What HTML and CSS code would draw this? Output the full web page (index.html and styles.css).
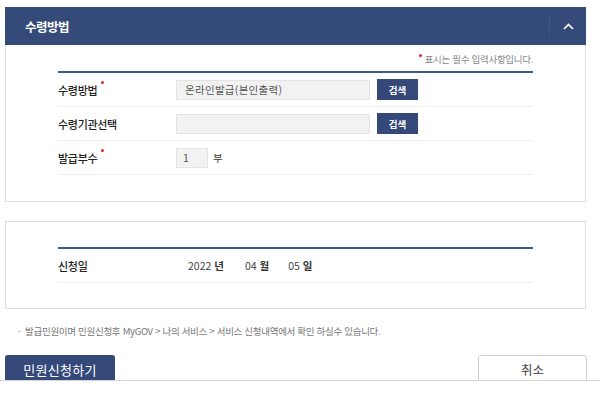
FILE: index.html
```html
<!DOCTYPE html>
<html lang="ko">
<head>
<meta charset="utf-8">
<link rel="stylesheet" href="styles.css">
</head>
<body>
<div class="page">
  <section class="panel">
    <div class="panel-head">
      <h2 class="panel-title">수령방법</h2>
      <div class="head-sep"></div>
      <button class="toggle" aria-label="접기">
        <svg width="11" height="7" viewBox="0 0 11 7"><path d="M1 6 L5.5 1.5 L10 6" fill="none" stroke="#fff" stroke-width="1.6"/></svg>
      </button>
    </div>
    <div class="panel-body">
      <p class="req-note"><span class="dot"></span>표시는 필수 입력사항입니다.</p>
      <div class="form-table">
        <div class="row">
          <div class="label">수령방법<span class="dot dot-label"></span></div>
          <div class="value">
            <div class="field wide">온라인발급(본인출력)</div>
            <button class="btn-search">검색</button>
          </div>
        </div>
        <div class="row">
          <div class="label">수령기관선택</div>
          <div class="value">
            <div class="field wide"></div>
            <button class="btn-search">검색</button>
          </div>
        </div>
        <div class="row">
          <div class="label">발급부수<span class="dot dot-label"></span></div>
          <div class="value">
            <div class="field small">1</div>
            <span class="unit">부</span>
          </div>
        </div>
      </div>
    </div>
  </section>

  <section class="panel panel-date">
    <div class="panel-body date-body">
      <div class="form-table">
        <div class="row">
          <div class="label">신청일</div>
          <div class="value date-value">
            <span class="d d-year">2022 <b>년</b></span>
            <span class="d d-month">04 <b>월</b></span>
            <span class="d d-day">05 <b>일</b></span>
          </div>
        </div>
      </div>
    </div>
  </section>

  <p class="info">· &nbsp;발급민원이며 민원신청후 MyGOV &gt; 나의 서비스 &gt; 서비스 신청내역에서 확인 하실수 있습니다.</p>

  <div class="actions">
    <button class="btn-primary">민원신청하기</button>
    <button class="btn-cancel">취소</button>
  </div>
</div>
<div class="bottom-bar"></div>
</body>
</html>
```

FILE: styles.css
```css
* { box-sizing: border-box; }
html, body { margin: 0; padding: 0; background: #fff; }
body {
  font-family: "Noto Sans CJK KR", "Noto Sans", "Liberation Sans", sans-serif;
  color: #333;
  font-size: 11px;
  overflow: hidden;
}
.page {
  padding: 7px 14px 0 5px;
}
.panel {
  border: 1px solid #dedede;
  border-top: none;
}
.panel-head {
  height: 38px;
  background: #344a78;
  display: flex;
  align-items: center;
  margin: 0 -1px 0 -1px;
  padding-left: 20px;
}
.panel-title {
  margin: 0;
  flex: 1;
  font-size: 12.5px;
  font-weight: bold;
  color: #fff;
  letter-spacing: -0.5px;
}
.head-sep {
  width: 0;
  height: 20px;
  border-left: 1px dotted #4c6090;
}
.toggle {
  width: 36px;
  height: 38px;
  border: 0;
  background: transparent;
  padding: 0;
  display: flex;
  align-items: center;
  justify-content: center;
}
.panel-body {
  padding: 7px 52px 26px 52px;
}
.req-note {
  margin: 0 0 5px;
  text-align: right;
  font-size: 9.5px;
  color: #888;
  line-height: 14px;
  letter-spacing: -0.3px;
}
.dot {
  display: inline-block;
  width: 3px;
  height: 3px;
  border-radius: 50%;
  background: #e0262b;
  vertical-align: top;
  margin: 2px 3px 0 0;
}
.dot-label {
  margin: -1px 0 0 4px;
}
.form-table {
  border-top: 2px solid #445a85;
}
.row {
  display: flex;
  align-items: center;
  height: 34px;
  border-bottom: 1px solid #efefef;
}
.label {
  width: 118px;
  font-size: 11px;
  font-weight: 500;
  color: #222;
  letter-spacing: -0.3px;
}
.value {
  display: flex;
  align-items: center;
}
.field {
  height: 20px;
  background: #f2f2f2;
  border: 1px solid #e4e4e4;
  font-size: 10.5px;
  color: #555;
  line-height: 18px;
  padding-left: 8px;
  letter-spacing: 0.3px;
}
.field.wide { width: 194px; }
.field.small { width: 32px; padding-left: 6px; }
.btn-search {
  margin-left: 7px;
  width: 41px;
  height: 21px;
  border: 0;
  background: #34497a;
  color: #fff;
  font-family: inherit;
  font-size: 9.5px;
  font-weight: bold;
  padding: 0;
}
.unit {
  margin-left: 5px;
  font-size: 10.5px;
  color: #333;
}
.panel-date {
  margin-top: 19px;
  border-top: 1px solid #dedede;
}
.date-body {
  padding: 25px 52px 25px 52px;
}
.date-body .row { height: 34px; }
.date-value {
  font-size: 10.5px;
  color: #444;
}
.d b { font-weight: bold; color: #333; }
.d-year { margin-left: 12px; }
.d-month { margin-left: 21px; }
.d-day { margin-left: 19px; }
.info {
  margin: 15px 0 0 13px;
  font-size: 9.5px;
  color: #777;
  line-height: 14px;
  letter-spacing: -0.3px;
}
.actions {
  margin-top: 17px;
  display: flex;
  justify-content: space-between;
  margin-right: -1px;
}
.btn-primary {
  width: 110px;
  height: 40px;
  border: 0;
  border-radius: 3px;
  background: #34497a;
  color: #fff;
  font-family: inherit;
  font-size: 13px;
  padding: 0 0 12px;
  letter-spacing: 0.3px;
}
.btn-cancel {
  width: 109px;
  height: 40px;
  border: 1px solid #cfcfcf;
  border-radius: 3px;
  background: #fff;
  color: #444;
  font-family: inherit;
  font-size: 12.5px;
  padding: 0 0 12px;
}
.bottom-bar {
  position: fixed;
  left: 0;
  right: 0;
  top: 380px;
  bottom: 0;
  background: #fff;
  border-top: 1px solid #d6d6d6;
}
```
